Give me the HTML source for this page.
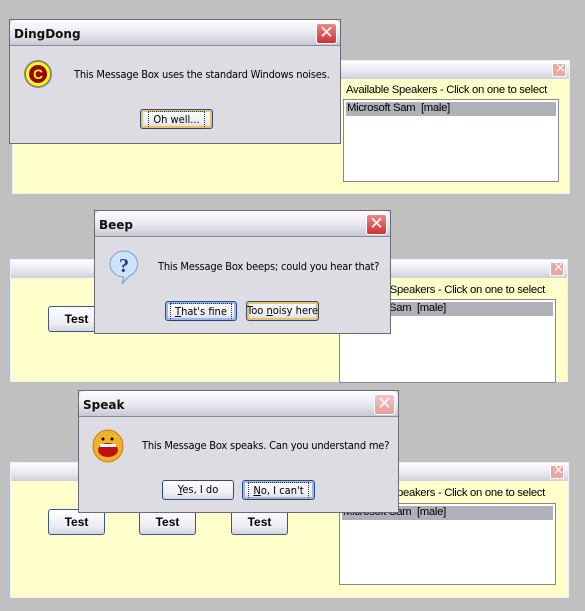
<!DOCTYPE html><html><head><style>
*{box-sizing:border-box;margin:0;padding:0}
body{width:585px;height:611px;background:#c0c0c0;position:relative;overflow:hidden;font-family:Tahoma,"DejaVu Sans","Liberation Sans",sans-serif;font-size:11px;color:#000}
.a{position:absolute}
.panel{position:absolute;border:1px solid #eef;background:#ffffcc}
.ptitle{position:absolute;left:0;right:0;top:0;height:18px;background:linear-gradient(#fdfdff,#e6e6ee 60%,#cfd0da)}
.pclose{position:absolute;width:14px;height:14px;background:#e9a8a4;border:1px solid #fff;top:2px}
.pclose:after{content:"×";position:absolute;left:2px;top:-3px;color:#fff;font-size:13px}
.lbl{position:absolute;font-size:11.3px;font-family:"Liberation Sans",sans-serif;letter-spacing:-0.3px}
.list{position:absolute;background:#fff;border:1px solid #888}
.sel{position:absolute;left:2px;right:2px;top:2px;height:14px;background:#b0b0b8;font-size:11.3px;font-family:"Liberation Sans",sans-serif;padding-left:1px;line-height:13px;letter-spacing:-0.3px}
.test{position:absolute;height:26px;border:1px solid #3a5a8c;border-radius:3px;background:linear-gradient(#fff,#ececf2 70%,#d4d4de);font:bold 12px "Liberation Sans",sans-serif;text-align:center;line-height:24px}
.dlg{position:absolute;background:#dcdce2;border:1px solid #6a6a78}
.dtitle{position:absolute;left:0;right:0;top:0;height:26px;background:linear-gradient(#fdfdff,#e8e8f0 55%,#c8c8d4);border-bottom:1px solid #8a8a98;border-radius:6px 6px 0 0;font:bold 12px Tahoma,"DejaVu Sans",sans-serif;padding:7px 0 0 4px;color:#111}
.dclose{position:absolute;top:3px;width:21px;height:21px;border-radius:3px;border:1px solid #fff;background:linear-gradient(#e88,#c33);color:#fff;text-align:center;font:bold 17px "DejaVu Sans",sans-serif;line-height:18px}
.dclose.dim{background:linear-gradient(#f4c4c4,#e49c9c)}
.msg{position:absolute;font-size:11px;font-family:"DejaVu Sans Condensed","DejaVu Sans",sans-serif;letter-spacing:-0.2px}
.btn{position:absolute;height:20px;border:1px solid #2a4a80;border-radius:3px;background:linear-gradient(#fff,#ececf2 70%,#d8d8e2);font-size:11px;font-family:"DejaVu Sans Condensed","DejaVu Sans",sans-serif;text-align:center;line-height:16px}
.btn span{display:inline-block;border:1px dotted #333;padding:0 4px;margin-top:1px}
.btn.f{box-shadow:inset 0 0 0 2px #f0c060}
.btn.b{box-shadow:inset 0 0 0 2px #9cb8e8}
</style></head><body>

<div class="panel" style="left:12px;top:60px;width:558px;height:134px"><div class="ptitle"></div><div class="pclose" style="left:539px"></div>
<div class="lbl" style="left:333px;top:23px">Available Speakers - Click on one to select</div>
<div class="list" style="left:330px;top:38px;width:216px;height:83px"><div class="sel">Microsoft Sam &nbsp;[male]</div></div></div>

<div class="panel" style="left:10px;top:259px;width:558px;height:123px"><div class="ptitle"></div><div class="pclose" style="left:539px"></div>
<div class="lbl" style="left:333px;top:24px">Available Speakers - Click on one to select</div>
<div class="list" style="left:328px;top:39px;width:217px;height:84px"><div class="sel">Microsoft Sam &nbsp;[male]</div></div>
<div class="test" style="left:37px;top:46px;width:57px">Test</div></div>

<div class="panel" style="left:10px;top:462px;width:559px;height:136px"><div class="ptitle"></div><div class="pclose" style="left:539px"></div>
<div class="lbl" style="left:333px;top:24px">Available Speakers - Click on one to select</div>
<div class="list" style="left:328px;top:40px;width:217px;height:82px"><div class="sel">Microsoft Sam &nbsp;[male]</div></div>
<div class="test" style="left:37px;top:46px;width:57px">Test</div>
<div class="test" style="left:128px;top:46px;width:57px">Test</div>
<div class="test" style="left:220px;top:46px;width:57px">Test</div></div>

<!-- DingDong -->
<div class="dlg" style="left:9px;top:19px;width:332px;height:125px"><div class="dtitle">DingDong</div><div class="dclose" style="left:306px">✕</div>
<svg class="a" style="left:13px;top:39px" width="30" height="30"><circle cx="15" cy="15" r="14" fill="#888"/><circle cx="15" cy="15" r="12" fill="#ff0"/><circle cx="15" cy="15" r="9" fill="#900"/><text x="15" y="20" font-size="14" font-weight="bold" fill="#ff0" text-anchor="middle" font-family="Liberation Sans">C</text></svg>
<div class="msg" style="left:64px;top:48px">This Message Box uses the standard Windows noises.</div>
<div class="btn f" style="left:130px;top:89px;width:73px"><span>Oh well...</span></div></div>

<!-- Beep -->
<div class="dlg" style="left:94px;top:210px;width:297px;height:124px"><div class="dtitle">Beep</div><div class="dclose" style="left:271px">✕</div>
<svg class="a" style="left:12px;top:38px" width="34" height="36"><path d="M17 2a14 13 0 1 0 0 26l-2 7 7-8a14 13 0 0 0-5-25z" fill="#cfe3f8" stroke="#7aa0c8"/><text x="17" y="23" font-size="20" font-weight="bold" fill="#1a3a8a" text-anchor="middle" font-family="Liberation Serif">?</text></svg>
<div class="msg" style="left:63px;top:49px">This Message Box beeps; could you hear that?</div>
<div class="btn b" style="left:70px;top:90px;width:72px"><span><u>T</u>hat's fine</span></div>
<div class="btn f" style="left:151px;top:90px;width:73px;line-height:18px">Too <u>n</u>oisy here</div></div>

<!-- Speak -->
<div class="dlg" style="left:78px;top:390px;width:321px;height:123px"><div class="dtitle">Speak</div><div class="dclose dim" style="left:295px">✕</div>
<svg class="a" style="left:12px;top:38px" width="34" height="36"><ellipse cx="17" cy="17" rx="15" ry="16" fill="#f2b12a" stroke="#c88010"/><circle cx="12" cy="10" r="1.5" fill="#000"/><circle cx="21" cy="10" r="1.5" fill="#000"/><ellipse cx="17" cy="21" rx="10" ry="7" fill="#c01010"/><rect x="9" y="15" width="16" height="3" fill="#fff"/></svg>
<div class="msg" style="left:63px;top:48px">This Message Box speaks. Can you understand me?</div>
<div class="btn" style="left:83px;top:89px;width:72px;line-height:18px"><u>Y</u>es, I do</div>
<div class="btn b" style="left:163px;top:89px;width:73px"><span><u>N</u>o, I can't</span></div></div>
</body></html>
